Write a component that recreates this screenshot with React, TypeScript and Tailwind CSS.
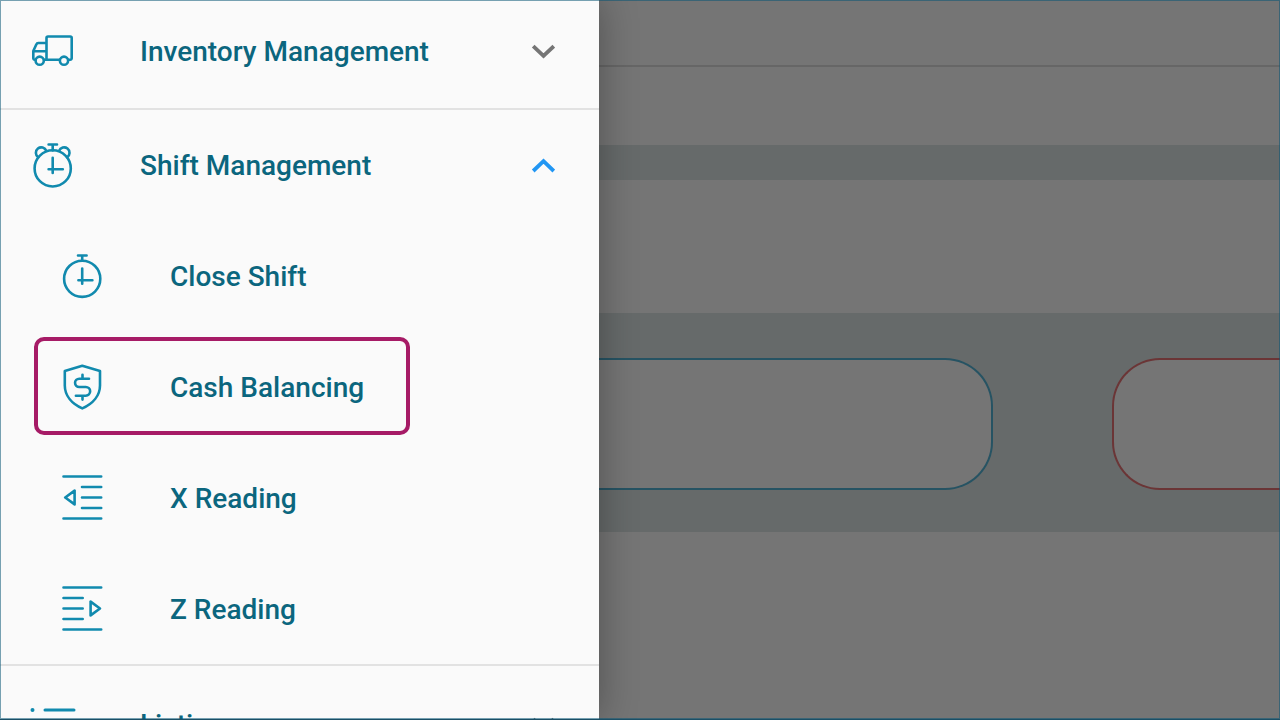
import type { ReactNode } from "react";

function Icon({ children }: { children: ReactNode }) {
  return (
    <svg
      className="h-[47px] w-[47px] shrink-0 text-[#118aae]"
      viewBox="0 0 47 47"
      fill="none"
      stroke="currentColor"
      strokeWidth="2.6"
      strokeLinecap="round"
      strokeLinejoin="round"
      aria-hidden="true"
    >
      {children}
    </svg>
  );
}

const TruckIcon = () => (
  <Icon>
    <path d="M16.5 31.7V10A1.5 1.5 0 0 1 18 8.5h22.2A1.5 1.5 0 0 1 41.7 10v20.2a1.5 1.5 0 0 1-1.5 1.5H38.3M29.7 31.7H14M16.5 15H8.3a2 2 0 0 0-1.9 1.3L3.3 23v7.2a1.5 1.5 0 0 0 1.5 1.5h.9M3.3 23.3h13.2" />
    <circle cx="9.7" cy="32.7" r="4.1" />
    <circle cx="34" cy="32.7" r="4.1" />
  </Icon>
);

const AlarmIcon = () => (
  <Icon>
    <circle cx="22.7" cy="26.4" r="18.1" />
    <path d="M18.6 2.5h8.4M22.7 2.5v6M22.7 15.8v15.2M18.6 27.2h14.2" />
    <path d="M8.2 15.2A5.4 5.4 0 1 1 16.3 8.8M37.2 15.2A5.4 5.4 0 1 0 29.1 8.8" />
  </Icon>
);

const StopwatchIcon = () => (
  <Icon>
    <circle cx="22.2" cy="25.8" r="18.1" />
    <path d="M18 2.5h8.6M22.2 2.5v5.3M22.2 15.5v15.2M18.4 27.2h14" />
  </Icon>
);

const ShieldIcon = () => (
  <Icon>
    <path d="M22.3 1.8 40 6.9v14.6c0 10-7.2 18.2-17.7 22.9C11.8 39.7 4.8 31.5 4.8 21.5V6.9Z" />
    <path d="M29 14.7H19.2a4.15 4.15 0 0 0 0 8.3h6.6a4.35 4.35 0 0 1 0 8.7H15.9M22.5 10.8v3.9M22.5 31.7v3.9" />
  </Icon>
);

const XReadingIcon = () => (
  <Icon>
    <path d="M3.5 1.5h37.7M22 12h19.2M22 22.5h19.2M22 33h19.2M3.5 43.5h37.7M14.6 15.6v13.8L5.2 22.5Z" />
  </Icon>
);

const ZReadingIcon = () => (
  <Icon>
    <path d="M3.5 1.5h37.7M3.5 12h19.2M3.5 22.5h19.2M3.5 33h19.2M3.5 43.5h37.7M30.6 15.6v13.8L40 22.5Z" />
  </Icon>
);

const ListIcon = () => (
  <Icon>
    <path d="M15 9h29M15 22h29M15 35h29" strokeWidth="3" />
    <path d="M2.5 9h.01M2.5 22h.01M2.5 35h.01" strokeWidth="4" />
  </Icon>
);

function Chevron({ open = false }: { open?: boolean }) {
  return (
    <svg
      className={open ? "h-[15px] w-6 text-[#2196f3]" : "h-[15px] w-6 text-[#757575]"}
      viewBox="0 0 24 15"
      fill="none"
      stroke="currentColor"
      strokeWidth="3.8"
      aria-hidden="true"
    >
      <path d={open ? "M2.2 13 12.5 3.2 22.8 13" : "M2.2 2.2 12.5 12 22.8 2.2"} />
    </svg>
  );
}

function SectionButton({
  icon,
  label,
  open = false,
  height,
}: {
  icon: ReactNode;
  label: string;
  open?: boolean;
  height: string;
}) {
  return (
    <button
      type="button"
      aria-expanded={open}
      className={`flex w-full items-center pl-[30px] pr-11 text-left ${height}`}
    >
      {icon}
      <span className="ml-[63px] flex-1">{label}</span>
      <Chevron open={open} />
    </button>
  );
}

function SubLink({
  icon,
  label,
  active = false,
}: {
  icon: ReactNode;
  label: string;
  active?: boolean;
}) {
  return (
    <li>
      <a
        href="#"
        aria-current={active ? "page" : undefined}
        className="relative flex h-[111px] items-center pl-[60px]"
      >
        {icon}
        <span className="ml-[63px]">{label}</span>
        {active && (
          <span className="absolute top-[5px] left-[34px] h-[98px] w-[376px] rounded-[10px] border-4 border-[#a61b66]" />
        )}
      </a>
    </li>
  );
}

export default function App() {
  return (
    <div className="flex h-screen flex-col overflow-hidden bg-[#757575] font-[Roboto,sans-serif]">
      <div className="relative flex min-h-0 flex-1 overflow-hidden">
        <nav className="z-10 w-[599px] shrink-0 bg-[#fafafa] text-[28px] leading-[33px] font-medium text-[#0b667e] shadow-[0_0_36px_rgba(0,0,0,0.32)]">
          <div className="border-b-2 border-[#e2e2e2] pb-[5px]">
            <SectionButton icon={<TruckIcon />} label="Inventory Management" height="h-[103px]" />
          </div>
          <div className="border-b-2 border-[#e2e2e2]">
            <SectionButton icon={<AlarmIcon />} label="Shift Management" open height="h-[111px]" />
            <ul className="-mb-px">
              <SubLink icon={<StopwatchIcon />} label="Close Shift" />
              <SubLink icon={<ShieldIcon />} label="Cash Balancing" active />
              <SubLink icon={<XReadingIcon />} label="X Reading" />
              <SubLink icon={<ZReadingIcon />} label="Z Reading" />
            </ul>
          </div>
          <SectionButton icon={<ListIcon />} label="Listing" height="h-[117px]" />
        </nav>
        <main className="min-w-0 flex-1">
          <div className="h-[67px] border-b-2 border-[#666666]" />
          <div className="h-[78px]" />
          <div className="h-[35px] bg-[#666a6a]" />
          <div className="h-[133px]" />
          <div className="flex h-[219px] gap-[119px] overflow-hidden bg-[#666a6a] pt-[45px]">
            <div className="h-[132px] w-[394px] shrink-0 rounded-r-[48px] border-2 border-l-0 border-[#265363] bg-[#757575]" />
            <div className="h-[132px] flex-1 rounded-l-[48px] border-2 border-r-0 border-[#6b3536] bg-[#757575]" />
          </div>
        </main>
        <div className="pointer-events-none absolute inset-0 z-20 border border-[#0a5575]/55" />
      </div>
      <div className="h-px bg-[#1b4f66]" />
    </div>
  );
}
